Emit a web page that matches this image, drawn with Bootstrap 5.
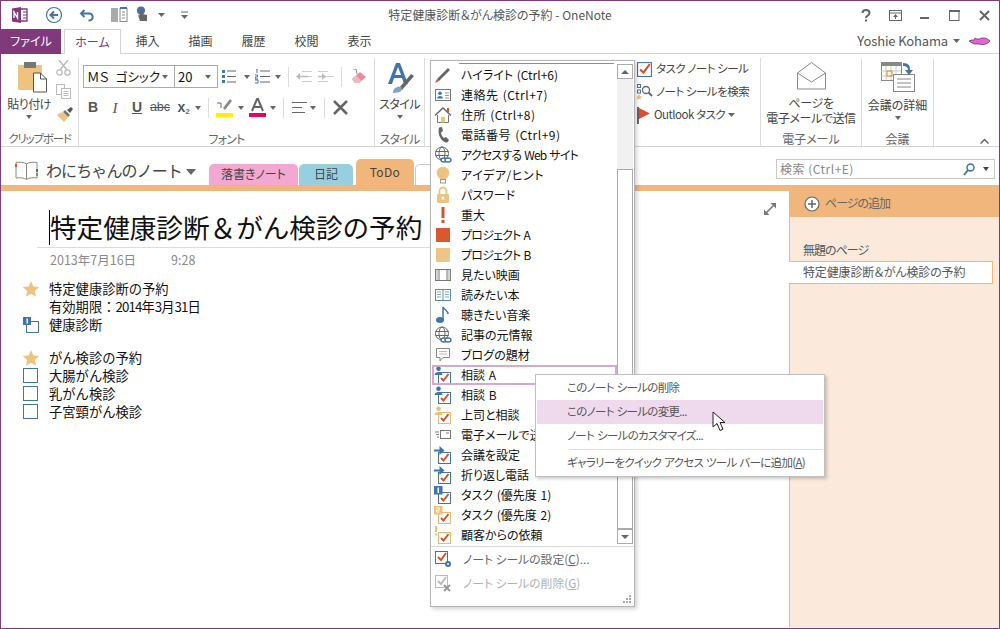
<!DOCTYPE html>
<html lang="ja">
<head>
<meta charset="utf-8">
<title>OneNote</title>
<link rel="stylesheet" href="https://cdn.jsdelivr.net/npm/bootstrap@5.3.0/dist/css/bootstrap.min.css">
<style>
html,body{margin:0;height:629px;overflow:hidden;background:#fff}
body{font-family:"Noto Sans CJK JP","Liberation Sans",sans-serif;font-size:12px;color:#444;line-height:1.2;font-feature-settings:"palt"}
.appwin{width:1000px;height:629px;border:1px solid #80397b;position:relative;overflow:hidden;background:#fff}
.titlebar{height:28px;padding-left:10px}
.qat svg{display:block}
.wintitle{position:absolute;left:0;right:0;top:7px;text-align:center;color:#555}
.wincaps{margin-left:auto}
.wincaps span{width:29.500px;display:flex;justify-content:center}
.tabrow{height:25px;border-bottom:1px solid #d4d4d4;color:#444}
.filetab{width:60px;height:25px;background:#80397b;color:#fff;display:flex;align-items:center;justify-content:center}
.rtab{width:53px;text-align:center;line-height:24px}
.rtab.sel{width:57px;margin-left:3px;height:25px;background:#fff;border:1px solid #d4d4d4;border-bottom:0;color:#80397b}
.userbox{margin-left:auto;padding-right:8px;color:#555;gap:5px;font-size:13px;letter-spacing:-.15px}
.ribbon{height:93px;border-bottom:1px solid #d4d4d4;position:relative}
.rgroup{position:relative;height:88px;margin-top:4px;border-right:1px solid #dcdcdc;flex:none}
.glabel{position:absolute;left:0;right:0;top:74px;text-align:center;color:#666;white-space:nowrap}
.gl-tight{letter-spacing:-.8px}
.gl-clip{font-size:11.500px;letter-spacing:-1.200px}
.g-clip{width:78px}.g-font{width:296px}.g-style{width:50px}.g-tag{width:336px}.g-mail{width:101px}.g-meet{width:72px}
.bigbtn{display:flex;flex-direction:column;align-items:center;text-align:center}
.btxt{letter-spacing:-.6px}
.dcaret{width:0;height:0;border-left:3.500px solid transparent;border-right:3.500px solid transparent;border-top:4px solid #666;display:inline-block;flex:none}
.clipcol{left:55px;top:2px;gap:8px}
.pastebtn{width:56px}
.fontsel{height:23px;border:1px solid #ababab;display:flex;align-items:center;justify-content:space-between;padding:0 6px 0 3px;color:#111;font-size:13px;background:#fff;white-space:nowrap}
.fs1{width:92px;margin-left:4px;word-spacing:4px;font-size:12.500px}.fs2{width:44px;margin-left:-1px}
.frow{height:23px;align-items:center}
.frow1{margin:7px 0 0 0}
.frow2{margin:8px 0 0 0}
.vsep{width:1px;height:20px;background:#dcdcdc;flex:none}
.fmt{width:22px;text-align:center;font-family:"Liberation Sans",sans-serif;font-size:14px;color:#555;font-weight:700;flex:none}
.fmt-i{font-family:"Liberation Serif",serif;font-style:italic;font-weight:400;font-size:15px}
.fmt-abc{width:24px;font-weight:400;font-size:12.500px;text-decoration:line-through}
.fmt-x{width:17px}
.fmt-x sub{color:#3f74ad;font-size:8px}
.m3{margin-left:3px}.m4{margin-left:4px}.m5{margin-left:5px}.m6{margin-left:6px}.m7{margin-left:7px}.m8{margin-left:8px}.m9{margin-left:9px}
.tagside{position:absolute;left:212px;top:2px;display:flex;flex-direction:column;gap:5px;white-space:nowrap;font-size:11.500px;letter-spacing:-.5px}
.tagside>div{height:18px;display:flex;align-items:center;gap:3px}
.mtop{padding-top:4px;height:72px}
.mtop .lines{line-height:15px;margin-top:5px;letter-spacing:-.4px}
.mtop .oneline{margin-top:5px;line-height:15px}
.notebar{height:38px;padding-left:14px;position:relative}
.nbname{font-size:16px;color:#444;margin-left:8px;letter-spacing:-.9px;line-height:38px;padding-top:4px;font-feature-settings:normal}
.nbcaret{margin-top:11px}
.nbtabs{margin-left:13px;align-self:flex-end;height:26px;align-items:flex-end}
.ntab{height:21px;display:flex;align-items:center;justify-content:center;border-radius:5px 5px 0 0;color:#444}
.t-pink{width:89px;background:#f2a8d0}.t-blue{width:54px;background:#98cfe0;margin-left:1px}
.t-org{width:58px;height:26px;background:#f0b67b;margin-left:3px;letter-spacing:.3px}
.t-more{width:20px;border:1px solid #c8c8c8;border-bottom:0;margin-left:1px}
.searchbox{position:absolute;left:775px;top:12px;width:219px;height:20px;border:1px solid #c8c8c8;display:flex;align-items:center;padding:0 5px 0 3px;color:#888;background:#fff;letter-spacing:.5px}
.orangeband{height:6px;background:#f0b67b}
.workspace{height:436px}
.pagearea{flex:1;position:relative;padding-left:48px;font-feature-settings:normal}
.pgtitle{font-size:26.600px;color:#111;line-height:36px;padding:18px 0 0 1px;white-space:nowrap}
.caretbar{position:absolute;left:48px;top:19px;width:1px;height:35px;background:#000}
.pgline{position:absolute;left:36px;top:56px;width:500px;height:1px;background:#dcdcdc}
.pgdate{color:#8a8a8a;margin-top:7px;font-size:12.500px;display:flex;gap:35px;padding-left:1px;line-height:16px}
.nlines{margin-top:12px;margin-left:-27px;color:#111;font-size:13.300px}
.nline{height:17.800px;display:flex;align-items:center;white-space:nowrap}
.nline svg{width:18px;height:18px;margin-right:9px;flex:none}
.nline .blank{width:18px;margin-right:9px}
.nline .dg{letter-spacing:-.9px}
.gapline{height:16px}
.expandico{position:absolute;left:763px;top:12px}
.sidebar{width:210px;background:#fbeadb;border-left:1px solid #f0b67b}
.addpage{height:26px;background:#f0b67b;margin-left:-1px;display:flex;align-items:center;padding-left:15px;gap:5px;color:#666;padding-bottom:1px;letter-spacing:-1px}
.pglist{padding-top:22px}
.pgitem{height:22px;padding-left:13px;display:flex;align-items:center;color:#555;letter-spacing:-1px}
.pgitem.sel{background:#fff;border:1px solid #f0b67b;border-left:0;width:204px;margin-left:-1px;padding-left:14px;height:23px;white-space:nowrap;letter-spacing:-.15px}
.tagmenu{position:absolute;left:429px;top:59px;width:205px;height:547px;background:#fff;border:1px solid #b5b5b5;box-shadow:2px 2px 4px rgba(0,0,0,.18);z-index:5}
.greenbar{position:absolute;left:28px;top:2px;width:155px;height:1px;background:#18e018}
.tlist{width:186px;padding:4px 0 0 1px;color:#111;flex:none}
.titem{height:20px;display:flex;align-items:center;white-space:nowrap;word-spacing:1px}
.titem svg{width:18px;height:18px;margin-left:2px;margin-right:9px;flex:none}
.titem.cur{outline:2px solid #d5a9d0;outline-offset:-2px}
.titem.tz{letter-spacing:-.8px}
.titem.tw{letter-spacing:.5px}
.scrollcol{width:16px;margin-top:3px;background:#f1f1f1;height:480px}
.sbtn{height:15px;border:1px solid #ababab;background:#fff;display:flex;align-items:center;justify-content:center;flex:none}
.strack{height:90px;flex:none}
.sthumb{flex:1;border:1px solid #ababab;background:#fff}
.uparrow{border-left:4px solid transparent;border-right:4px solid transparent;border-bottom:4px solid #666;width:0;height:0}
.dnarrow{border-left:4px solid transparent;border-right:4px solid transparent;border-top:4px solid #666;width:0;height:0}
.tfoot{border-top:1px solid #d8d8d8;margin-top:1px;padding:0 0 0 3px;color:#666;font-size:11.800px}
.fitem{height:24px;display:flex;align-items:center;gap:11px}
.fitem svg{width:18px;height:18px;flex:none}
.fitem.off{color:#b0b0b0}
.grip{position:absolute;right:3px;bottom:3px}
.ctxmenu.dropdown-menu{position:absolute;left:534px;top:373px;width:290px;height:103px;padding:1px;margin:0;border-radius:0;border:1px solid #c0c0c0;background:#fff;box-shadow:2px 2px 3px rgba(0,0,0,.2);z-index:6;min-width:0}
.ctxmenu .dropdown-item{height:24px;line-height:23px;padding:0 0 0 30px;color:#555;font-size:11.500px;white-space:nowrap;letter-spacing:-.7px;word-spacing:1px}
.ctxmenu .dropdown-item.hot{background:#efd9ec}
.ctxmenu .dropdown-divider{margin:1px 0 1px 32px;border-color:#dcdcdc;opacity:1}
.ptr{position:absolute;left:711px;top:410px;z-index:7}
.chev{position:absolute;left:979px;top:84px}
u{text-underline-offset:1px}
</style>
</head>
<body>
<svg width="0" height="0" class="position-absolute">
<defs>
<symbol id="chk" viewBox="0 0 18 18"><rect x="2.500" y="3.500" width="13" height="13" fill="#fff" stroke="#3f74ad"/><path d="M5 10l3 3 6-8" fill="none" stroke="#d9502e" stroke-width="2"/></symbol>
<symbol id="pchk" viewBox="0 0 18 18"><rect x="4.500" y="6.500" width="12" height="11" fill="#fff" stroke="#3f74ad"/><path d="M7 12l2.500 2.500 5-6.500" fill="none" stroke="#d9502e" stroke-width="2"/><circle cx="4.500" cy="2.800" r="2.300" fill="#3f74ad"/><path d="M.5 9c0-4 8-4 8 0z" fill="#3f74ad"/></symbol>
<symbol id="pchko" viewBox="0 0 18 18"><rect x="4.500" y="6.500" width="12" height="11" fill="#fff" stroke="#e8b96a"/><path d="M7 12l2.500 2.500 5-6.500" fill="none" stroke="#d9502e" stroke-width="2"/><circle cx="4.500" cy="2.800" r="2.300" fill="#ecc078"/><path d="M.5 9c0-4 8-4 8 0z" fill="#ecc078"/></symbol>
<symbol id="achk" viewBox="0 0 18 18"><rect x="4.500" y="6.500" width="12" height="11" fill="#fff" stroke="#3f74ad"/><path d="M7 12l2.500 2.500 5-6.500" fill="none" stroke="#d9502e" stroke-width="2"/><path d="M0 3.500h5.500V0l5 4.500-5 4.500V5.500H0z" fill="#3f74ad"/></symbol>
<symbol id="globe" viewBox="0 0 18 18"><g fill="none" stroke="#666"><circle cx="8" cy="7.500" r="6.500"/><ellipse cx="8" cy="7.500" rx="3" ry="6.500"/><path d="M1.500 5.500h13M1.500 9.500h13"/></g><g fill="#fff" stroke="#3f74ad" stroke-width="1.400"><ellipse cx="10" cy="14" rx="3" ry="2"/><ellipse cx="14" cy="14" rx="3" ry="2"/></g></symbol>
<symbol id="n1" viewBox="0 0 18 18"><rect x="4.500" y="6.500" width="12" height="11" fill="#fff" stroke="#3f74ad"/><path d="M7 12l2.500 2.500 5-6.500" fill="none" stroke="#d9502e" stroke-width="2"/><rect x="0" y="0" width="8.500" height="8.500" fill="#3f74ad"/><rect x="3.500" y="1.500" width="1.500" height="5.500" fill="#fff"/></symbol>
<symbol id="n2" viewBox="0 0 18 18"><rect x="4.500" y="6.500" width="12" height="11" fill="#fff" stroke="#e8b96a"/><path d="M7 12l2.500 2.500 5-6.500" fill="none" stroke="#d9502e" stroke-width="2"/><rect x="0" y="0" width="8.500" height="8.500" fill="#ecc078"/><path d="M2.500 2h3v2h-3v2h3" fill="none" stroke="#fff"/></symbol>
<symbol id="star" viewBox="0 0 18 18"><path d="M9 1l2.400 5.400 5.800.6-4.400 3.900 1.300 5.800L9 13.700l-5.100 3 1.300-5.800L.8 7l5.800-.6z" fill="#eec27f"/></symbol>
<symbol id="box" viewBox="0 0 18 18"><rect x="1.500" y="1.500" width="14" height="14" fill="#fff" stroke="#3f74ad"/></symbol>
<symbol id="arrowdn" viewBox="0 0 7 4"><path d="M0 0h7L3.500 4z" fill="#666"/></symbol>
</defs>
</svg>
<div class="appwin">
  <div class="titlebar d-flex align-items-center">
    <div class="qat d-flex align-items-center">
      <svg width="18" height="18" viewBox="0 0 18 18"><path d="M1 2.500 10 1v16l-9-1.500z" fill="#80397b"/><path d="M10 3h6v12h-6" fill="none" stroke="#80397b" stroke-width="1.300"/><path d="M3 12V6l3.500 6V6" fill="none" stroke="#fff" stroke-width="1.400"/><path d="M12 6h4M12 9h4M12 12h4" stroke="#80397b"/></svg>
      <svg class="ms-3" width="18" height="18" viewBox="0 0 18 18"><circle cx="9" cy="9" r="7.500" fill="#fff" stroke="#3f74ad" stroke-width="1.200"/><path d="M13 9H6M9 5.500 5.500 9 9 12.500" fill="none" stroke="#3f74ad" stroke-width="2"/></svg>
      <svg class="ms-3" width="16" height="16" viewBox="0 0 16 16"><path d="M5.500 3 2 6.500 5.500 10" fill="none" stroke="#3f74ad" stroke-width="2"/><path d="M2.500 6.500H10c5 0 5 7-.5 7" fill="none" stroke="#3f74ad" stroke-width="2"/></svg>
      <svg class="ms-3" width="17" height="16" viewBox="0 0 17 16"><rect x="0" y="1" width="7" height="14" fill="#aaa"/><rect x="9" y="1.500" width="7" height="13" fill="#fff" stroke="#888"/><path d="M9 1h7" stroke="#3f74ad" stroke-width="2"/><path d="M11 5h3M11 8h3M11 11h3" stroke="#888"/></svg>
      <svg class="ms-2" width="14" height="18" viewBox="0 0 14 18"><circle cx="5" cy="4.500" r="4" fill="#3f74ad"/><path d="M3.500 4.500v5l-1.500-.5 2 6h7v-6l-4.500-1V4.500z" fill="#666"/></svg>
      <svg class="ms-2" width="7" height="4"><use href="#arrowdn"/></svg>
      <svg class="ms-3" width="7" height="8" viewBox="0 0 7 8"><path d="M0 1h7" stroke="#666"/><path d="M0 4h7L3.500 8z" fill="#666"/></svg>
    </div>
    <div class="wintitle">特定健康診断＆がん検診の予約 - OneNote</div>
    <div class="wincaps d-flex align-items-center">
      <span><svg width="10" height="13" viewBox="0 0 10 13"><path d="M1.500 4C1.500 0 8.500 0 8.500 4c0 2.500-3.500 2.500-3.500 5" fill="none" stroke="#666" stroke-width="2"/><rect x="4" y="10.500" width="2" height="2" fill="#666"/></svg></span>
      <span><svg width="13" height="11" viewBox="0 0 13 11"><rect x=".5" y=".5" width="12" height="10" fill="none" stroke="#666"/><path d="M0 3h13" stroke="#666"/><path d="M6.500 4 4 7h5zM6 7h1v2H6z" fill="#666"/></svg></span>
      <span><svg width="10" height="10"><rect x="0" y="7" width="9" height="2" fill="#666"/></svg></span>
      <span><svg width="11" height="11"><rect x=".5" y="1" width="9.500" height="9.500" fill="none" stroke="#666"/><rect x="0" y="0" width="11" height="2" fill="#666"/></svg></span>
      <span><svg width="11" height="11"><path d="M1 1l9 9M10 1l-9 9" stroke="#666" stroke-width="2"/></svg></span>
    </div>
  </div>

  <div class="tabrow d-flex">
    <div class="filetab">ファイル</div>
    <div class="rtab sel">ホーム</div>
    <div class="rtab">挿入</div>
    <div class="rtab">描画</div>
    <div class="rtab">履歴</div>
    <div class="rtab">校閲</div>
    <div class="rtab">表示</div>
    <div class="userbox d-flex align-items-center">Yoshie Kohama <svg width="7" height="4"><use href="#arrowdn"/></svg>
      <svg class="ms-1" width="22" height="10" viewBox="0 0 22 10"><path d="M0 5l3-1h2l1-2 2 1h2c4-2 8-1 11 2-3 4-8 4-11 3H5z" fill="#ef5fdc" stroke="#222" stroke-width=".6"/></svg>
    </div>
  </div>

  <div class="ribbon d-flex">
    <div class="rgroup g-clip">
      <div class="bigbtn pastebtn">
        <svg width="30" height="31" viewBox="0 0 30 31" class="mt-1 ms-2"><rect x="0" y="3" width="24" height="25" rx="1" fill="#efc27d"/><rect x="6" y="0" width="12" height="6" fill="#777"/><path d="M15.500 11h7l6 6v13h-13z" fill="#fff" stroke="#555"/><path d="M22.500 11v6h6" fill="none" stroke="#555"/></svg>
        <div class="text-nowrap mt-1 btxt">貼り付け</div>
        <span class="dcaret mt-1"></span>
      </div>
      <div class="clipcol d-flex flex-column position-absolute">
        <svg width="15" height="16" viewBox="0 0 15 16"><path d="M3 0l8 10M12 0 4 10" stroke="#bbb" stroke-width="1.500"/><circle cx="3.500" cy="12.500" r="2.700" fill="none" stroke="#bbb" stroke-width="1.300"/><circle cx="11.500" cy="12.500" r="2.700" fill="none" stroke="#bbb" stroke-width="1.300"/></svg>
        <svg width="15" height="15" viewBox="0 0 15 15"><rect x=".5" y=".5" width="8" height="10" fill="#fff" stroke="#bbb"/><rect x="5.500" y="4.500" width="9" height="10" fill="#fff" stroke="#bbb"/><path d="M7.500 7.500h5M7.500 9.500h5M7.500 11.500h5" stroke="#bbb"/></svg>
        <svg width="17" height="15" viewBox="0 0 17 15"><path d="M1 8l7 7 4-5-6-5z" fill="#efc27d"/><path d="M7 5l5 5 2-2-5-5z" fill="#777"/><path d="M11 3l3 3 3-4-2-2z" fill="#555"/></svg>
      </div>
      <div class="glabel gl-clip">クリップボード</div>
    </div>

    <div class="rgroup g-font">
      <div class="d-flex frow frow1">
        <div class="fontsel fs1"><span>ＭＳ ゴシック</span><span class="dcaret"></span></div>
        <div class="fontsel fs2"><span>20</span><span class="dcaret"></span></div>
        <svg class="m4" width="14" height="15" viewBox="0 0 14 15"><path d="M5 2h9M5 7.500h9M5 13h9" stroke="#666"/><rect x="0" y="1" width="3" height="3" fill="#3f74ad"/><rect x="0" y="6" width="3" height="3" fill="#3f74ad"/><rect x="0" y="11" width="3" height="3" fill="#3f74ad"/></svg>
        <span class="dcaret m8"></span>
        <svg class="m5" width="15" height="15" viewBox="0 0 15 15"><path d="M5 2h10M5 7.500h10M5 13h10" stroke="#666"/><path d="M1 0h1v4M0 6h2.500v2H0v2h3M0 11h3v3H0" fill="none" stroke="#3f74ad"/></svg>
        <span class="dcaret m5"></span>
        <span class="vsep m7"></span>
        <svg class="m7" width="16" height="11" viewBox="0 0 16 11"><path d="M6 .5h10M6 5.500h10M6 10.500h10" stroke="#ccc"/><path d="M0 5.500 4 2v7z" fill="#bbb"/><path d="M3 5.500h9" stroke="#bbb" stroke-width="1.500"/></svg>
        <svg class="m6" width="16" height="11" viewBox="0 0 16 11"><path d="M0 .5h10M0 10.500h10" stroke="#ccc"/><path d="M6 5.500h10" stroke="#ccc"/><path d="M8 5.500 4 2v7z" fill="#bbb"/><path d="M0 5.500h5" stroke="#bbb" stroke-width="1.500"/></svg>
        <span class="vsep m7"></span>
        <svg class="m9" width="15" height="15" viewBox="0 0 15 15"><path d="M1 10 9 3l6 5-7 6H4z" fill="#ee8a98"/><path d="M1 10 5 6.500l5 5L8 14H4z" fill="#f4b8c0"/><path d="M2 0h3l1 5" fill="none" stroke="#888"/></svg>
      </div>
      <div class="d-flex frow frow2">
        <span class="fmt m3">B</span>
        <span class="fmt fmt-i">I</span>
        <span class="fmt text-decoration-underline">U</span>
        <span class="fmt fmt-abc">abc</span>
        <span class="fmt fmt-x m3">x<sub>2</sub></span>
        <span class="dcaret m3"></span>
        <span class="vsep m7"></span>
        <svg class="m7" width="17" height="19" viewBox="0 0 17 19"><path d="M7 10 14 1l2 2-7 9z" fill="#888"/><path d="M1 5h4v5" fill="none" stroke="#666"/><rect y="15" width="17" height="4" fill="#ffee00"/></svg>
        <span class="dcaret m5"></span>
        <svg class="m5" width="17" height="19" viewBox="0 0 17 19"><path d="M3 13 8 1h1l5 12M5 9h7" fill="none" stroke="#666" stroke-width="2"/><rect y="15" width="17" height="4" fill="#f0005c"/></svg>
        <span class="dcaret m4"></span>
        <span class="vsep m7"></span>
        <svg class="m8" width="15" height="11" viewBox="0 0 15 11"><path d="M0 .5h15M0 5.500h10M0 10.500h13" stroke="#666"/></svg>
        <span class="dcaret m3"></span>
        <span class="vsep m8"></span>
        <svg class="m8" width="15" height="15" viewBox="0 0 15 15"><path d="M1 1l13 13M14 1 1 14" stroke="#666" stroke-width="2.500"/></svg>
      </div>
      <div class="glabel gl-tight">フォント</div>
    </div>

    <div class="rgroup g-style">
      <div class="bigbtn">
        <svg width="30" height="31" viewBox="0 0 30 31" class="mt-1"><path d="M3 22 11 1h4l8 21h-4l-2-6H9l-2 6zM10 13h6l-3-8z" fill="#3f74ad" fill-rule="evenodd"/><path d="M14 26 26 12l3 2-12 14z" fill="#666"/><path d="M8 31c0-5 4-7 8-6 2 3 0 6-8 6z" fill="#7aa3cd"/></svg>
        <div class="text-nowrap mt-1 btxt">スタイル</div>
        <span class="dcaret mt-1"></span>
      </div>
      <div class="glabel gl-tight">スタイル</div>
    </div>

    <div class="rgroup g-tag">
      <div class="tagside">
        <div><svg width="16" height="16" viewBox="2 2 15 15"><use href="#chk" width="18" height="18"/></svg>タスク ノート シール</div>
        <div><svg width="16" height="16" viewBox="0 0 16 16"><rect x=".5" y=".5" width="3" height="3" fill="none" stroke="#3f74ad"/><rect x=".5" y="6" width="3" height="3" fill="none" stroke="#3f74ad"/><path d="M2 10l1 2 2 .3-1.500 1.400.5 2.100L2 14.800 0 15.800l.5-2.100L-1 12.300 1 12z" fill="#eec27f"/><circle cx="9" cy="6" r="3.500" fill="none" stroke="#666" stroke-width="1.300"/><path d="M11.500 8.500l3.500 3.500" stroke="#666" stroke-width="2"/></svg>ノート シールを検索</div>
        <div><svg width="14" height="17" viewBox="0 0 14 17"><rect x="0" y="0" width="2" height="17" fill="#666"/><path d="M2 1l11 5.500L2 12z" fill="#d9502e"/></svg>Outlook タスク <svg width="7" height="4"><use href="#arrowdn"/></svg></div>
      </div>
    </div>

    <div class="rgroup g-mail">
      <div class="bigbtn mtop">
        <svg width="29" height="28" viewBox="0 0 29 28"><path d="M.5 11 14.500 .5 28.500 11v16H.5z" fill="#fff" stroke="#888"/><path d="M.5 11l14 9 14-9" fill="none" stroke="#888"/></svg>
        <div class="lines">ページを<br>電子メールで送信</div>
      </div>
      <div class="glabel">電子メール</div>
    </div>

    <div class="rgroup g-meet">
      <div class="bigbtn mtop">
        <svg width="34" height="30" viewBox="0 0 34 30"><rect x=".5" y=".5" width="20" height="18" fill="#fff" stroke="#888"/><rect x="0" y="0" width="21" height="4" fill="#888"/><path d="M5 4v14M10 4v14M15 4v14M0 9h20M0 14h20" stroke="#ccc"/><rect x="6" y="9" width="5" height="5" fill="none" stroke="#e08a2d"/><rect x="12.500" y="12.500" width="21" height="17" fill="#fff" stroke="#888"/><path d="M16 17h14M16 21h14M16 25h14" stroke="#888"/><path d="M22 1c6 0 7 3 7 7h3l-4 5-4-5h3c0-3-2-4-5-4z" fill="#3f74ad"/></svg>
        <div class="oneline text-nowrap">会議の詳細</div>
        <span class="dcaret mt-1"></span>
      </div>
      <div class="glabel">会議</div>
    </div>
    <svg class="chev" width="9" height="6" viewBox="0 0 9 6"><path d="M.5 5.500l4-4 4 4" fill="none" stroke="#666" stroke-width="1.500"/></svg>
  </div>

  <div class="notebar d-flex">
    <svg class="align-self-end mb-1" width="23" height="20" viewBox="0 0 23 20"><path d="M11.500 3C9 1 4 1 1 1.500V17c3-.5 8-.5 10.500 1.500C14 16.500 19 16.500 22 17V1.500C19 1 14 1 11.500 3zM11.500 3v15.500" fill="none" stroke="#888"/><rect y="3" width="2" height="3" fill="#d9502e"/><rect x="21" y="8" width="2" height="3" fill="#3f74ad"/><rect x="21" y="12" width="2" height="3" fill="#4caf50"/></svg>
    <div class="nbname">わにちゃんのノート</div>
    <svg class="nbcaret align-self-center ms-1" width="10" height="6"><path d="M0 0h10L5 6z" fill="#666"/></svg>
    <div class="nbtabs d-flex">
      <div class="ntab t-pink">落書きノート</div>
      <div class="ntab t-blue">日記</div>
      <div class="ntab t-org">ToDo</div>
      <div class="ntab t-more"></div>
    </div>
    <div class="searchbox"><span>検索 (Ctrl+E)</span>
      <svg class="ms-auto" width="12" height="13" viewBox="0 0 12 13"><circle cx="7.500" cy="4.500" r="3.500" fill="none" stroke="#3f74ad" stroke-width="1.500"/><path d="M5 7l-4 5" stroke="#3f74ad" stroke-width="2"/></svg>
      <svg class="ms-2" width="6" height="4"><path d="M0 0h6L3 4z" fill="#444"/></svg>
    </div>
  </div>
  <div class="orangeband"></div>

  <div class="workspace d-flex">
    <div class="pagearea">
      <span class="caretbar"></span>
      <div class="pgtitle">特定健康診断＆がん検診の予約</div>
      <div class="pgline"></div>
      <div class="pgdate"><span>2013年7月16日</span><span>9:28</span></div>
      <div class="nlines">
        <div class="nline"><svg><use href="#star"/></svg>特定健康診断の予約</div>
        <div class="nline"><span class="blank"></span>有効期限：<span class="dg">2014</span>年<span class="dg">3</span>月<span class="dg">31</span>日</div>
        <div class="nline"><svg viewBox="0 0 18 18"><rect x="4.500" y="5.500" width="12" height="11" fill="#fff" stroke="#3f74ad"/><rect x="1" y="1" width="8" height="8" fill="#3f74ad"/><rect x="4.500" y="2.500" width="1.400" height="5" fill="#fff"/></svg>健康診断</div>
        <div class="gapline"></div>
        <div class="nline"><svg><use href="#star"/></svg>がん検診の予約</div>
        <div class="nline"><svg><use href="#box"/></svg>大腸がん検診</div>
        <div class="nline"><svg><use href="#box"/></svg>乳がん検診</div>
        <div class="nline"><svg><use href="#box"/></svg>子宮頸がん検診</div>
      </div>
      <svg class="expandico" width="12" height="12" viewBox="0 0 12 12"><path d="M1.500 10.500l9-9" stroke="#777" stroke-width="1.600"/><path d="M6.500 0H12v5.500zM0 6.500V12h5.500z" fill="#777"/></svg>
    </div>
    <div class="sidebar">
      <div class="addpage"><svg width="16" height="16" viewBox="0 0 16 16"><circle cx="8" cy="8" r="7" fill="#fff" stroke="#666" stroke-width="1.200"/><path d="M8 4v8M4 8h8" stroke="#666" stroke-width="1.500"/></svg>ページの追加</div>
      <div class="pglist">
        <div class="pgitem">無題のページ</div>
        <div class="pgitem sel">特定健康診断＆がん検診の予約</div>
      </div>
    </div>
  </div>

  <div class="tagmenu">
    <div class="greenbar"></div>
    <div class="d-flex">
      <div class="tlist">
        <div class="titem"><svg viewBox="0 0 18 18"><path d="M3 13 14 2l2 2L5 15z" fill="#666"/><path d="M3 13l2 2-4 2z" fill="#d9502e"/></svg>ハイライト (Ctrl+6)</div>
        <div class="titem tw"><svg viewBox="0 0 18 18"><rect x="1.500" y="3.500" width="15" height="11" fill="#fff" stroke="#777"/><circle cx="6" cy="7.300" r="1.800" fill="#3f74ad"/><path d="M3 12.500c0-3.500 6-3.500 6 0z" fill="#3f74ad"/><path d="M11 7h4M11 9.500h4M11 12h4" stroke="#999"/></svg>連絡先 (Ctrl+7)</div>
        <div class="titem tw"><svg viewBox="0 0 18 18"><path d="M1 9.500 9 2l8 7.500" fill="none" stroke="#666" stroke-width="1.500"/><path d="M3.500 9v7.500h11V9" fill="#fff" stroke="#777"/><rect x="7" y="11" width="4" height="5.500" fill="#eec27f"/><rect x="13" y="2" width="2" height="4" fill="#d9502e"/></svg>住所 (Ctrl+8)</div>
        <div class="titem tw"><svg viewBox="0 0 18 18"><path d="M5 1.500 8 1l1 4-2 1.500c0 2 1.500 4.500 3 5.500l2-1 3 3-1.500 2.500C8 17 3 9 5 1.500z" fill="#666"/></svg>電話番号 (Ctrl+9)</div>
        <div class="titem tz"><svg><use href="#globe"/></svg>アクセスする Web サイト</div>
        <div class="titem tw"><svg viewBox="0 0 18 18"><circle cx="9" cy="7" r="6.300" fill="#eec27f"/><rect x="6.500" y="13.500" width="5" height="3.500" fill="#fff" stroke="#999"/></svg>アイデア/ヒント</div>
        <div class="titem"><svg viewBox="0 0 18 18"><path d="M5.500 8V5a3.500 3.500 0 0 1 7 0v3" fill="none" stroke="#eec27f" stroke-width="1.800"/><rect x="3" y="8" width="12" height="9" rx="1" fill="#eec27f"/><circle cx="9" cy="12" r="1.500" fill="#fff"/></svg>パスワード</div>
        <div class="titem"><svg viewBox="0 0 18 18"><rect x="7.500" y="1" width="3" height="11" fill="#d9502e"/><rect x="7.500" y="14" width="3" height="3" fill="#d9502e"/></svg>重大</div>
        <div class="titem tz"><svg viewBox="0 0 18 18"><rect x="2" y="2" width="14" height="14" fill="#d9582f"/></svg>プロジェクト A</div>
        <div class="titem tz"><svg viewBox="0 0 18 18"><rect x="2" y="2" width="14" height="14" fill="#edc685"/></svg>プロジェクト B</div>
        <div class="titem"><svg viewBox="0 0 18 18"><rect x="1.500" y="3.500" width="15" height="11" fill="#fff" stroke="#777"/><path d="M5 3.500v11M13 3.500v11" stroke="#777"/><path d="M1.500 5h3.500M1.500 7h3.500M1.500 9h3.500M1.500 11h3.500M1.500 13h3.500M13 5h3.500M13 7h3.500M13 9h3.500M13 11h3.500M13 13h3.500" stroke="#aaa"/></svg>見たい映画</div>
        <div class="titem"><svg viewBox="0 0 18 18"><rect x="1.500" y="3.500" width="15" height="11" fill="#fff" stroke="#5b8bbd"/><path d="M9 3.500v11" stroke="#5b8bbd"/><path d="M3 6h4M3 8.500h4M3 11h4M11 6h4M11 8.500h4M11 11h4" stroke="#8aa"/></svg>読みたい本</div>
        <div class="titem"><svg viewBox="0 0 18 18"><ellipse cx="6" cy="14" rx="4" ry="3" fill="#3f74ad"/><path d="M9 14V1c1 3 5 3 5 7" fill="none" stroke="#3f74ad" stroke-width="1.500"/></svg>聴きたい音楽</div>
        <div class="titem"><svg><use href="#globe"/></svg>記事の元情報</div>
        <div class="titem"><svg viewBox="0 0 18 18"><path d="M2.500 2.500h13v9H9l-3 3.500v-3.500H2.500z" fill="#fff" stroke="#888"/><path d="M5 5.500h8M5 8h8" stroke="#bbb"/></svg>ブログの題材</div>
        <div class="titem cur"><svg><use href="#pchk"/></svg>相談 A</div>
        <div class="titem"><svg><use href="#pchk"/></svg>相談 B</div>
        <div class="titem"><svg><use href="#pchko"/></svg>上司と相談</div>
        <div class="titem"><svg viewBox="0 0 18 18"><rect x="6.500" y="4.500" width="10" height="8" fill="#fff" stroke="#777"/><path d="M1 6h4M2 8.500h3M3 11h2M12 7h3" stroke="#777"/></svg>電子メールで送信</div>
        <div class="titem"><svg><use href="#achk"/></svg>会議を設定</div>
        <div class="titem"><svg><use href="#achk"/></svg>折り返し電話</div>
        <div class="titem"><svg><use href="#n1"/></svg>タスク (優先度 1)</div>
        <div class="titem"><svg><use href="#n2"/></svg>タスク (優先度 2)</div>
        <div class="titem"><svg viewBox="0 0 18 18"><rect x="4.500" y="6.500" width="12" height="11" fill="#fff" stroke="#e8b96a"/><path d="M7 12l2.500 2.500 5-6.500" fill="none" stroke="#d9502e" stroke-width="2"/><rect x="1" y="0" width="2" height="6" fill="#ecc078"/><rect x="1" y="7.500" width="2" height="2" fill="#ecc078"/></svg>顧客からの依頼</div>
      </div>
      <div class="scrollcol d-flex flex-column">
        <div class="sbtn"><span class="uparrow"></span></div>
        <div class="strack"></div>
        <div class="sthumb"></div>
        <div class="sbtn"><span class="dnarrow"></span></div>
      </div>
    </div>
    <div class="tfoot">
      <div class="fitem"><svg viewBox="0 0 18 18"><rect x="1.500" y="1.500" width="12" height="12" fill="#fff" stroke="#3f74ad"/><path d="M4 7l3 3 5-7" fill="none" stroke="#d9502e" stroke-width="2"/><circle cx="14" cy="14" r="3" fill="#3f74ad"/><circle cx="14" cy="14" r="1" fill="#fff"/></svg><span>ノート シールの設定(<u>C</u>)...</span></div>
      <div class="fitem off"><svg viewBox="0 0 18 18"><rect x="1.500" y="1.500" width="12" height="12" fill="#fff" stroke="#bbb"/><path d="M4 7l3 3 5-7" fill="none" stroke="#bbb" stroke-width="2"/><path d="M10 11l6 6M16 11l-6 6" stroke="#999" stroke-width="2"/></svg><span>ノート シールの削除(<u>G</u>)</span></div>
    </div>
    <svg class="grip" width="8" height="8" viewBox="0 0 8 8"><path d="M6 0h2v2H6zM3 3h2v2H3zM6 3h2v2H6zM0 6h2v2H0zM3 6h2v2H3zM6 6h2v2H6z" fill="#aaa"/></svg>
  </div>

  <div class="dropdown-menu show ctxmenu">
    <a class="dropdown-item" href="#">このノート シールの削除</a>
    <a class="dropdown-item hot" href="#">このノート シールの変更...</a>
    <a class="dropdown-item" href="#">ノート シールのカスタマイズ...</a>
    <hr class="dropdown-divider">
    <a class="dropdown-item" href="#">ギャラリーをクイック アクセス ツール バーに追加(<u>A</u>)</a>
  </div>
  <svg class="ptr" width="14" height="21" viewBox="0 0 14 21"><path d="M1 1v15l4-3.500 3 7 3-1.300-3-6.700h5z" fill="#fff" stroke="#222"/></svg>
</div>
</body>
</html>
